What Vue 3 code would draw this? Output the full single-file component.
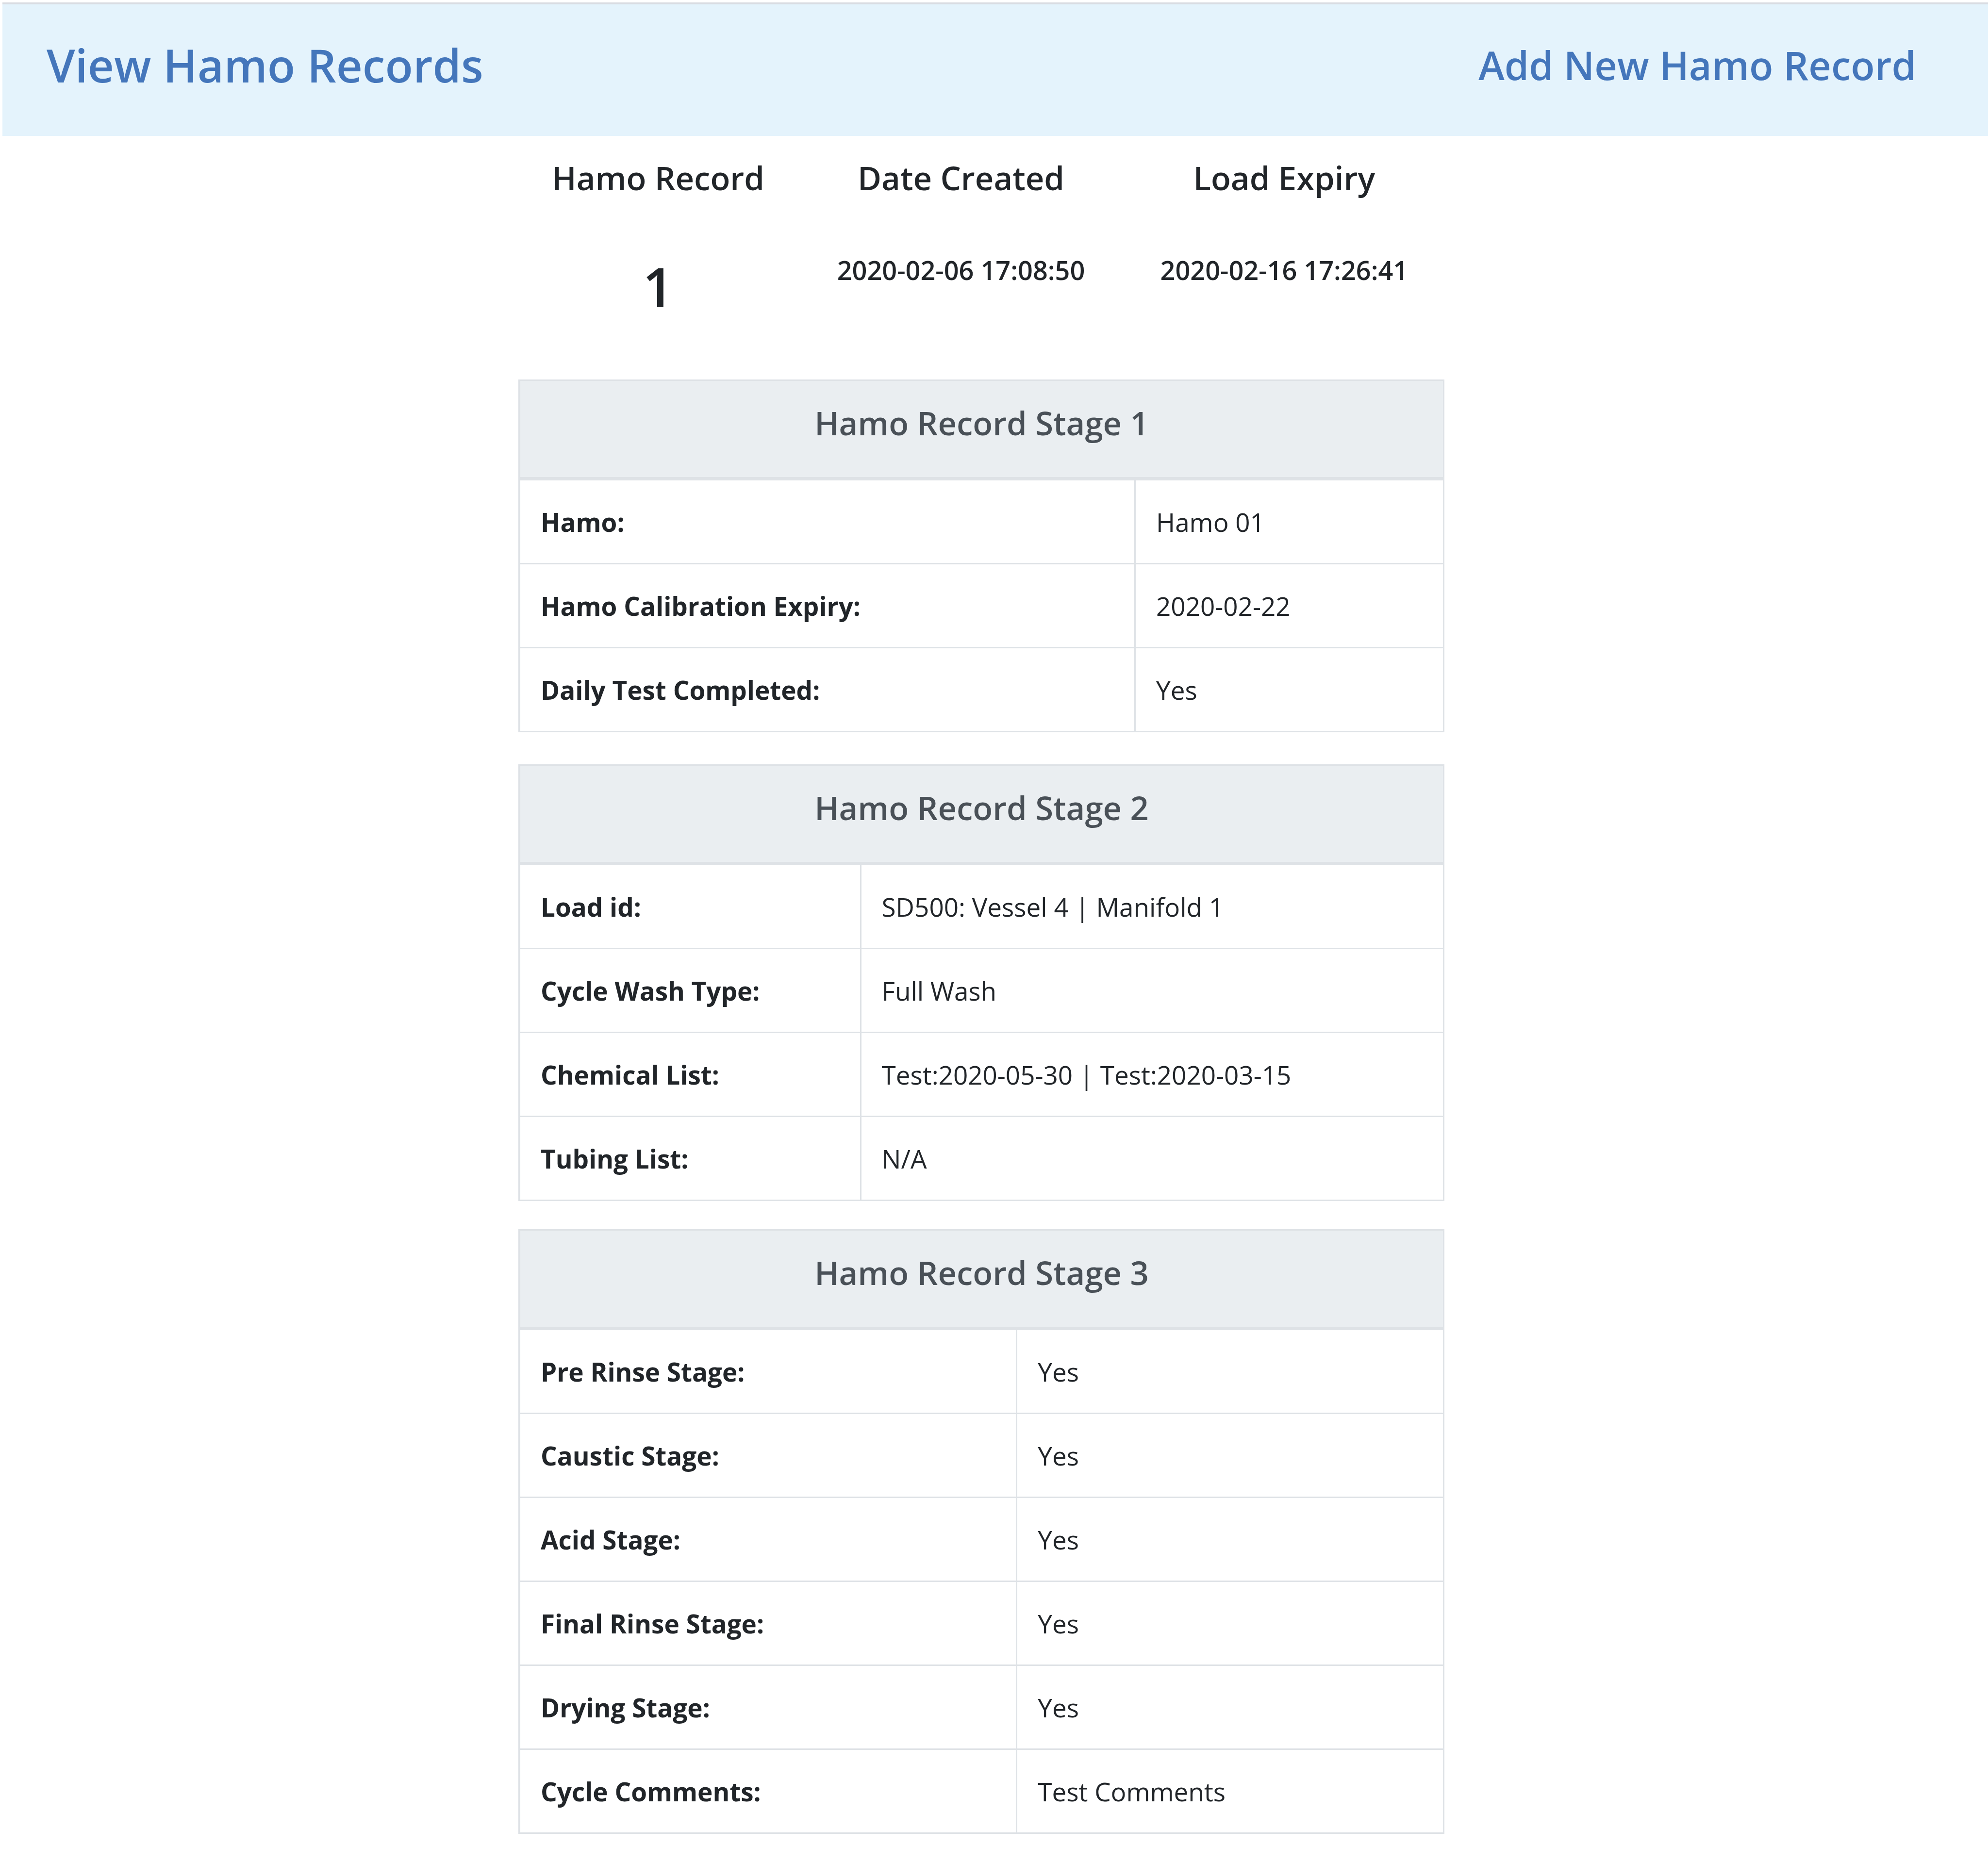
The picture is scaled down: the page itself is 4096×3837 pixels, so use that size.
<script setup>
const summary = [
  { label: 'Hamo Record', value: '1', large: true },
  { label: 'Date Created', value: '2020-02-06 17:08:50' },
  { label: 'Load Expiry', value: '2020-02-16 17:26:41' },
]

const stages = [
  {
    id: 'one',
    title: 'Hamo Record Stage 1',
    rows: [
      ['Hamo:', 'Hamo 01'],
      ['Hamo Calibration Expiry:', '2020-02-22'],
      ['Daily Test Completed:', 'Yes'],
    ],
  },
  {
    id: 'two',
    title: 'Hamo Record Stage 2',
    rows: [
      ['Load id:', 'SD500: Vessel 4 | Manifold 1'],
      ['Cycle Wash Type:', 'Full Wash'],
      ['Chemical List:', 'Test:2020-05-30 | Test:2020-03-15'],
      ['Tubing List:', 'N/A'],
    ],
  },
  {
    id: 'three',
    title: 'Hamo Record Stage 3',
    rows: [
      ['Pre Rinse Stage:', 'Yes'],
      ['Caustic Stage:', 'Yes'],
      ['Acid Stage:', 'Yes'],
      ['Final Rinse Stage:', 'Yes'],
      ['Drying Stage:', 'Yes'],
      ['Cycle Comments:', 'Test Comments'],
    ],
  },
]
</script>

<template>
  <div class="page">
    <header class="bar">
      <h1 class="title">View Hamo Records</h1>
      <a class="add" href="#">Add New Hamo Record</a>
    </header>

    <main class="content">
      <div class="column">
        <table class="summary">
          <colgroup>
            <col class="s-record" />
            <col class="s-created" />
            <col class="s-expiry" />
          </colgroup>
          <thead>
            <tr>
              <th v-for="item in summary" :key="item.label" scope="col">{{ item.label }}</th>
            </tr>
          </thead>
          <tbody>
            <tr>
              <td v-for="item in summary" :key="item.label" :class="{ large: item.large }">{{ item.value }}</td>
            </tr>
          </tbody>
        </table>

        <table v-for="stage in stages" :key="stage.id" class="stage" :class="stage.id">
          <colgroup>
            <col class="label-col" />
            <col />
          </colgroup>
          <thead>
            <tr>
              <th colspan="2" scope="colgroup">{{ stage.title }}</th>
            </tr>
          </thead>
          <tbody>
            <tr v-for="[label, value] in stage.rows" :key="label">
              <th scope="row">{{ label }}</th>
              <td>{{ value }}</td>
            </tr>
          </tbody>
        </table>
      </div>
    </main>
  </div>
</template>

<style>
body {
  margin: 0;
  background: #fff;
}
</style>

<style scoped>
.page {
  box-sizing: border-box;
  padding-top: 5px;
  color: #212529;
  font-family: "Segoe UI", "Open Sans", "Noto Sans", sans-serif;
  font-size: 53px;
}

.bar {
  display: flex;
  justify-content: space-between;
  margin-left: 5px;
  padding: 65px 148px 86px 91px;
  border-top: 4px solid #d9dce2;
  background: #e4f3fc;
  color: #4476bb;
  line-height: 120px;
}

.title {
  margin: 0;
  font-size: 94px;
  font-weight: 600;
}

.add {
  color: inherit;
  font-size: 81px;
  font-weight: 600;
  text-decoration: none;
}

.content {
  display: grid;
  grid-template-columns: 1068fr 1908fr 1120fr;
}

.column {
  grid-column: 2;
}

table {
  width: 100%;
  table-layout: fixed;
  border-collapse: separate;
  border-spacing: 0;
}

.summary {
  text-align: center;
}

.s-record {
  width: 30.2%;
}

.s-created {
  width: 35.2%;
}

.s-expiry {
  width: 34.6%;
}

.summary th {
  padding: 44px 0 0;
  font-size: 67px;
  font-weight: 600;
  line-height: 84px;
}

.summary td {
  padding: 114px 0 124px;
  vertical-align: top;
  font-size: 54px;
  font-weight: 600;
  line-height: 68px;
}

.summary .large {
  font-size: 112px;
  line-height: 136px;
}

.stage {
  margin-bottom: 58px;
  border-top: 3px solid #dee2e6;
  border-left: 4px solid #dee2e6;
}

.stage.one {
  margin-bottom: 66px;
}

.one .label-col {
  width: 66.6%;
}

.two .label-col {
  width: 36.9%;
}

.three .label-col {
  width: 53.8%;
}

.stage th,
.stage td {
  padding: 46px 42px 44px;
  border-right: 3px solid #dee2e6;
  border-bottom: 3px solid #dee2e6;
  line-height: 80px;
  text-align: left;
}

.stage tbody th {
  font-weight: 700;
}

.stage thead th {
  padding: 44px 42px 70px;
  border-bottom-width: 7px;
  background: #eaeef1;
  color: #495057;
  font-size: 67px;
  font-weight: 600;
  line-height: 84px;
  text-align: center;
}
</style>
